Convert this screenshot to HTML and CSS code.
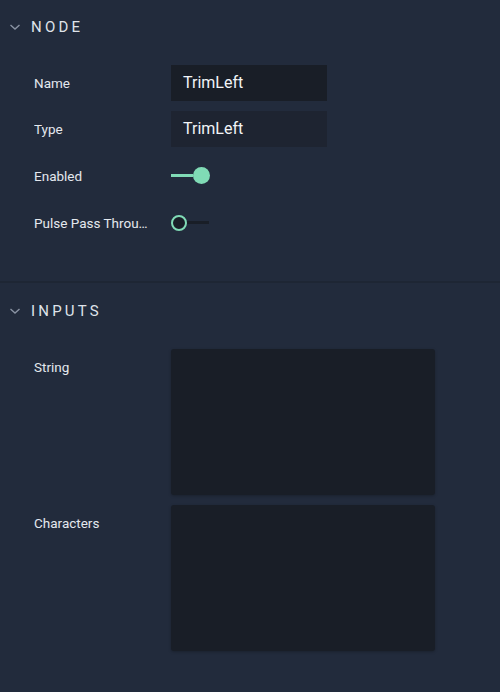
FILE: index.html
```html
<!DOCTYPE html>
<html lang="en">
<head>
  <meta charset="UTF-8">
  <title>Node Properties</title>
  <link rel="stylesheet" href="styles.css">
</head>
<body>
  <div class="panel">
    <section class="section">
      <div class="section-head">
        <svg class="chevron" width="12" height="8" viewBox="0 0 12 8"><path d="M1.5 2 L6 6 L10.5 2" fill="none" stroke="#8a93a3" stroke-width="1.4"/></svg>
        <span class="section-title">NODE</span>
      </div>
      <div class="rows">
        <div class="row">
          <label class="row-label">Name</label>
          <div class="field">TrimLeft</div>
        </div>
        <div class="row">
          <label class="row-label">Type</label>
          <div class="field field-readonly">TrimLeft</div>
        </div>
        <div class="row row-toggle">
          <label class="row-label">Enabled</label>
          <div class="toggle on"><span class="track"></span><span class="thumb"></span></div>
        </div>
        <div class="row row-toggle">
          <label class="row-label" title="Pulse Pass Through">Pulse Pass Throu…</label>
          <div class="toggle off"><span class="thumb"></span><span class="track"></span></div>
        </div>
      </div>
    </section>
    <section class="section">
      <div class="section-head">
        <svg class="chevron" width="12" height="8" viewBox="0 0 12 8"><path d="M1.5 2 L6 6 L10.5 2" fill="none" stroke="#8a93a3" stroke-width="1.4"/></svg>
        <span class="section-title">INPUTS</span>
      </div>
      <div class="rows">
        <div class="row row-top">
          <label class="row-label">String</label>
          <div class="area"></div>
        </div>
        <div class="row row-top">
          <label class="row-label">Characters</label>
          <div class="area"></div>
        </div>
      </div>
    </section>
  </div>
</body>
</html>
```

FILE: styles.css
```css
body { margin: 0; background: #222b3c; font-family: Roboto, "Noto Sans", sans-serif; color: #e4e8ee; }
.panel { width: 500px; height: 692px; background: #222b3c; }
.section { padding-bottom: 40px; }
.section + .section { border-top: 2px solid #1e2634; padding-bottom: 0; }
.section-head { height: 54px; display: flex; align-items: center; padding-left: 9px; }
.section + .section .section-head { height: 56px; }
.chevron { margin-right: 10px; }
.section-title { font-size: 15px; letter-spacing: 3.2px; color: #dfe3ea; }
.rows { padding: 11px 0 0 34px; display: flex; flex-direction: column; gap: 10px; }
.section + .section .rows { padding-top: 10px; }
.row { display: flex; align-items: center; min-height: 36px; }
.row-toggle { min-height: 37px; }
.row-top { align-items: flex-start; }
.row-label { width: 122px; margin-right: 15px; font-size: 13.5px; white-space: nowrap; overflow: hidden; }
.row-top .row-label { padding-top: 10px; }
.field { width: 144px; height: 36px; line-height: 36px; padding-left: 12px; background: #191e27; color: #f2f4f7; font-size: 16px; }
.field-readonly { background: #1e2431; }
.toggle { display: flex; align-items: center; height: 18px; }
.toggle .track { height: 3px; width: 22px; }
.toggle.on .track { background: #80dbb6; }
.toggle.on .thumb { width: 17px; height: 17px; border-radius: 50%; background: #80dbb6; }
.toggle.off .thumb { width: 12px; height: 12px; border-radius: 50%; border: 2.5px solid #80dbb6; background: #191e27; }
.toggle.off .track { background: #191e27; width: 22px; }
.area { width: 264px; height: 146px; background: #191e27; border-radius: 3px; box-shadow: 0 1px 3px rgba(0, 0, 0, 0.25); }
```
